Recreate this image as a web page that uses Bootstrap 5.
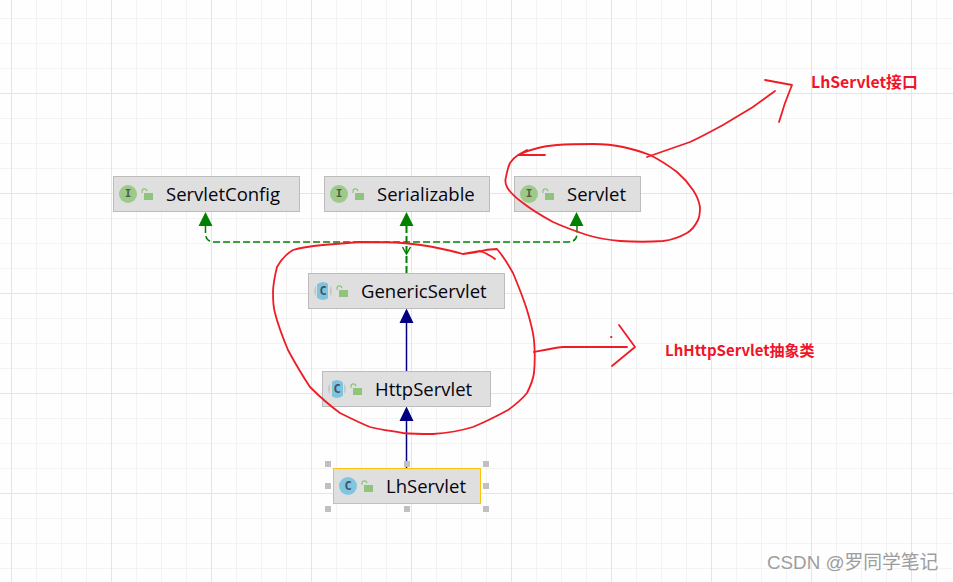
<!DOCTYPE html>
<html lang="zh">
<head>
<meta charset="utf-8">
<title>LhServlet</title>
<link href="https://cdn.jsdelivr.net/npm/bootstrap@5.3.0/dist/css/bootstrap.min.css" rel="stylesheet">
<style>
html,body{margin:0;height:100%;background:#fff;overflow:hidden}
.canvas{position:relative;width:953px;height:582px;overflow:hidden;background-color:#fefefe}
.gridlayer{position:absolute;inset:0;display:block}
.wires{position:absolute;inset:0;z-index:1}
.ink{position:absolute;inset:0;z-index:3;pointer-events:none}
.node{position:absolute;z-index:2;height:36px;top:176px;background:#dfdfdf;border:1px solid #bcbcbc;padding-left:5px;font:18.5px/1 "Open Sans",sans-serif;color:#04040e;white-space:nowrap}
.node.picked{border-color:#fcc30a;padding-left:5px}
.n-config{left:113px;width:187px}
.n-serial{left:324px;width:166px}
.n-servlet{left:514px;width:127px}
.n-generic{left:308px;top:273px;width:197px}
.n-http{left:322px;top:371px;width:169px}
.n-lh{left:333px;top:468px;width:148px}
.badge-i,.badge-c{width:18px;height:18px;border-radius:50%;flex:none;font:bold 11px/18px "DejaVu Sans Mono",monospace;text-align:center}
.badge-i{background:#9dca88;color:#4f5b49}
.badge-c{background:#80c6e0;color:#3e5563;font-size:12px}
.badge-c.abstract{background:linear-gradient(90deg,#c3c8ce 0 2px,#dfdfdf 2px 3.500px,#7fc4df 3.500px 14.500px,#dfdfdf 14.500px 16px,#c3c8ce 16px)}
.padlock{flex:none;margin:0 12px 0 4px}
.tag{position:absolute;z-index:4;color:#f01428;font-family:"Noto Sans CJK SC","Liberation Sans",sans-serif;font-weight:700;white-space:nowrap;line-height:1}
.tag-a{left:811px;top:74px;font-size:15.800px}
.tag-b{left:665px;top:342px;font-size:15px}
.mark-wm{position:absolute;z-index:4;left:767px;top:553px;color:#9d9d9d;font:18.800px/1.100 "Liberation Sans","Noto Sans CJK SC",sans-serif;white-space:nowrap}
.grip{position:absolute;z-index:2;width:6px;height:6px;background:#c0c0c0}
.gx-a{left:325px}.gx-b{left:404px}.gx-c{left:483px}
.gy-a{top:461px}.gy-b{top:483px}.gy-c{top:506px}
</style>
</head>
<body>
<div class="canvas">
  <svg class="gridlayer" width="953" height="582" aria-hidden="true">
    <defs>
      <pattern id="g" x="11" y="18" width="100" height="100" patternUnits="userSpaceOnUse">
        <path d="M25.500 0V100M50.500 0V100M75.500 0V100M0 .5H100M0 25.500H100M0 50.500H100" stroke="#f3f3f3" fill="none"/>
        <path d="M.5 0V100M0 75.500H100" stroke="#e5e5e5" fill="none"/>
      </pattern>
    </defs>
    <rect width="953" height="582" fill="#fefefe"/>
    <rect width="953" height="582" fill="url(#g)"/>
  </svg>

  <svg class="wires" width="953" height="582" aria-hidden="true">
    <g fill="none" stroke="#008000" stroke-width="1.500" stroke-dasharray="7 3">
      <path d="M205.500 226V233Q205.500 242 215 242H568Q577 242 577 233V226"/>
      <path d="M406.500 226V273" stroke-width="2"/>
    </g>
    <path d="M402.500 247L406.500 254L410.500 247" fill="none" stroke="#008000" stroke-width="1.500"/>
    <path d="M198.500 226L205.500 212L212.500 226ZM399.500 226L406.500 212L413.500 226ZM569.500 226L576.500 212L583.500 226Z" fill="#008000"/>
    <path d="M406.500 321V371M406.500 419V468" stroke="#000080" stroke-width="1.500" fill="none"/>
    <path d="M399.500 323L406.500 308.500L413.500 323ZM399.500 421L406.500 406.500L413.500 421Z" fill="#000080"/>
  </svg>

  <div class="node n-config d-flex align-items-center"><span class="badge-i">I</span><svg class="padlock" width="13" height="12" viewBox="0 0 13 12"><path d="M1 5V3.200A2.400 2.400 0 0 1 5.800 3.200" fill="none" stroke="#8fc47c" stroke-width="1.200"/><rect x="3" y="5" width="9" height="7" fill="#8fc47c"/></svg><span>ServletConfig</span></div>
  <div class="node n-serial d-flex align-items-center"><span class="badge-i">I</span><svg class="padlock" width="13" height="12" viewBox="0 0 13 12"><path d="M1 5V3.200A2.400 2.400 0 0 1 5.800 3.200" fill="none" stroke="#8fc47c" stroke-width="1.200"/><rect x="3" y="5" width="9" height="7" fill="#8fc47c"/></svg><span>Serializable</span></div>
  <div class="node n-servlet d-flex align-items-center"><span class="badge-i">I</span><svg class="padlock" width="13" height="12" viewBox="0 0 13 12"><path d="M1 5V3.200A2.400 2.400 0 0 1 5.800 3.200" fill="none" stroke="#8fc47c" stroke-width="1.200"/><rect x="3" y="5" width="9" height="7" fill="#8fc47c"/></svg><span>Servlet</span></div>
  <div class="node n-generic d-flex align-items-center"><span class="badge-c abstract">C</span><svg class="padlock" width="13" height="12" viewBox="0 0 13 12"><path d="M1 5V3.200A2.400 2.400 0 0 1 5.800 3.200" fill="none" stroke="#8fc47c" stroke-width="1.200"/><rect x="3" y="5" width="9" height="7" fill="#8fc47c"/></svg><span>GenericServlet</span></div>
  <div class="node n-http d-flex align-items-center"><span class="badge-c abstract">C</span><svg class="padlock" width="13" height="12" viewBox="0 0 13 12"><path d="M1 5V3.200A2.400 2.400 0 0 1 5.800 3.200" fill="none" stroke="#8fc47c" stroke-width="1.200"/><rect x="3" y="5" width="9" height="7" fill="#8fc47c"/></svg><span>HttpServlet</span></div>
  <div class="node n-lh picked d-flex align-items-center"><span class="badge-c">C</span><svg class="padlock" width="13" height="12" viewBox="0 0 13 12"><path d="M1 5V3.200A2.400 2.400 0 0 1 5.800 3.200" fill="none" stroke="#8fc47c" stroke-width="1.200"/><rect x="3" y="5" width="9" height="7" fill="#8fc47c"/></svg><span>LhServlet</span></div>

  <span class="grip gx-a gy-a"></span><span class="grip gx-b gy-a"></span><span class="grip gx-c gy-a"></span>
  <span class="grip gx-a gy-b"></span><span class="grip gx-c gy-b"></span>
  <span class="grip gx-a gy-c"></span><span class="grip gx-b gy-c"></span><span class="grip gx-c gy-c"></span>

  <svg class="ink" width="953" height="582" aria-hidden="true">
    <g fill="none" stroke="#ee1c25" stroke-width="1.800" stroke-linecap="round" stroke-linejoin="round">
      <path d="M545 155L518 155L527 150M518 155C530 149 545 146 557 145C570 144 582 144 593 144C606 144 614 145 623 147C633 149 642 152 650 155C660 160 669 166 677 172C684 178 689 184 693 190C697 196 699 201 700 207C700 212 700 216 698 220C695 226 692 230 687 233C680 237 672 240 663 241C650 242 635 242 620 241C608 240 597 238 587 235C575 231 564 227 553 222C542 216 532 210 523 203C516 198 510 193 507 187C505 183 505 180 506 177C507 172 508 167 510 163C512 160 515 157 518 155"/>
      <path d="M647 157C661 152 676 147 690 142C701 137 712 131 723 125C733 119 743 113 753 107C760 102 768 96 775 91"/>
      <path d="M765 80L792 85L785 103L779 122"/>
      <path d="M495 259C491 256 486 253 480 251C474 252 468 253 463 254L477 252C484 250 491 249 497 249C503 256 508 264 513 273C518 285 523 297 527 310C530 320 533 330 534 340C535 351 535 362 534 373C533 380 530 387 527 393C522 399 515 405 508 410C497 416 485 422 473 427C460 431 447 433 433 434C423 434 413 434 403 433C392 431 381 430 370 427C360 423 350 418 340 413C329 405 319 396 310 387C302 375 295 363 288 350C283 338 278 325 275 313C273 306 273 300 273 293C273 284 275 275 277 267C281 260 286 254 293 250C303 247 313 246 323 245C335 244 348 243 360 242C375 242 389 242 403 243C413 244 423 245 433 247C443 249 453 251 463 254"/>
      <path d="M534 352C544 350 553 348 563 347C585 347 605 347 627 347"/>
      <path d="M619 325L635 347L612 366"/>
      <path d="M611 337L611.500 337"/>
    </g>
  </svg>

  <span class="tag tag-a">LhServlet接口</span>
  <span class="tag tag-b">LhHttpServlet抽象类</span>
  <span class="mark-wm">CSDN @罗同学笔记</span>
</div>
</body>
</html>
